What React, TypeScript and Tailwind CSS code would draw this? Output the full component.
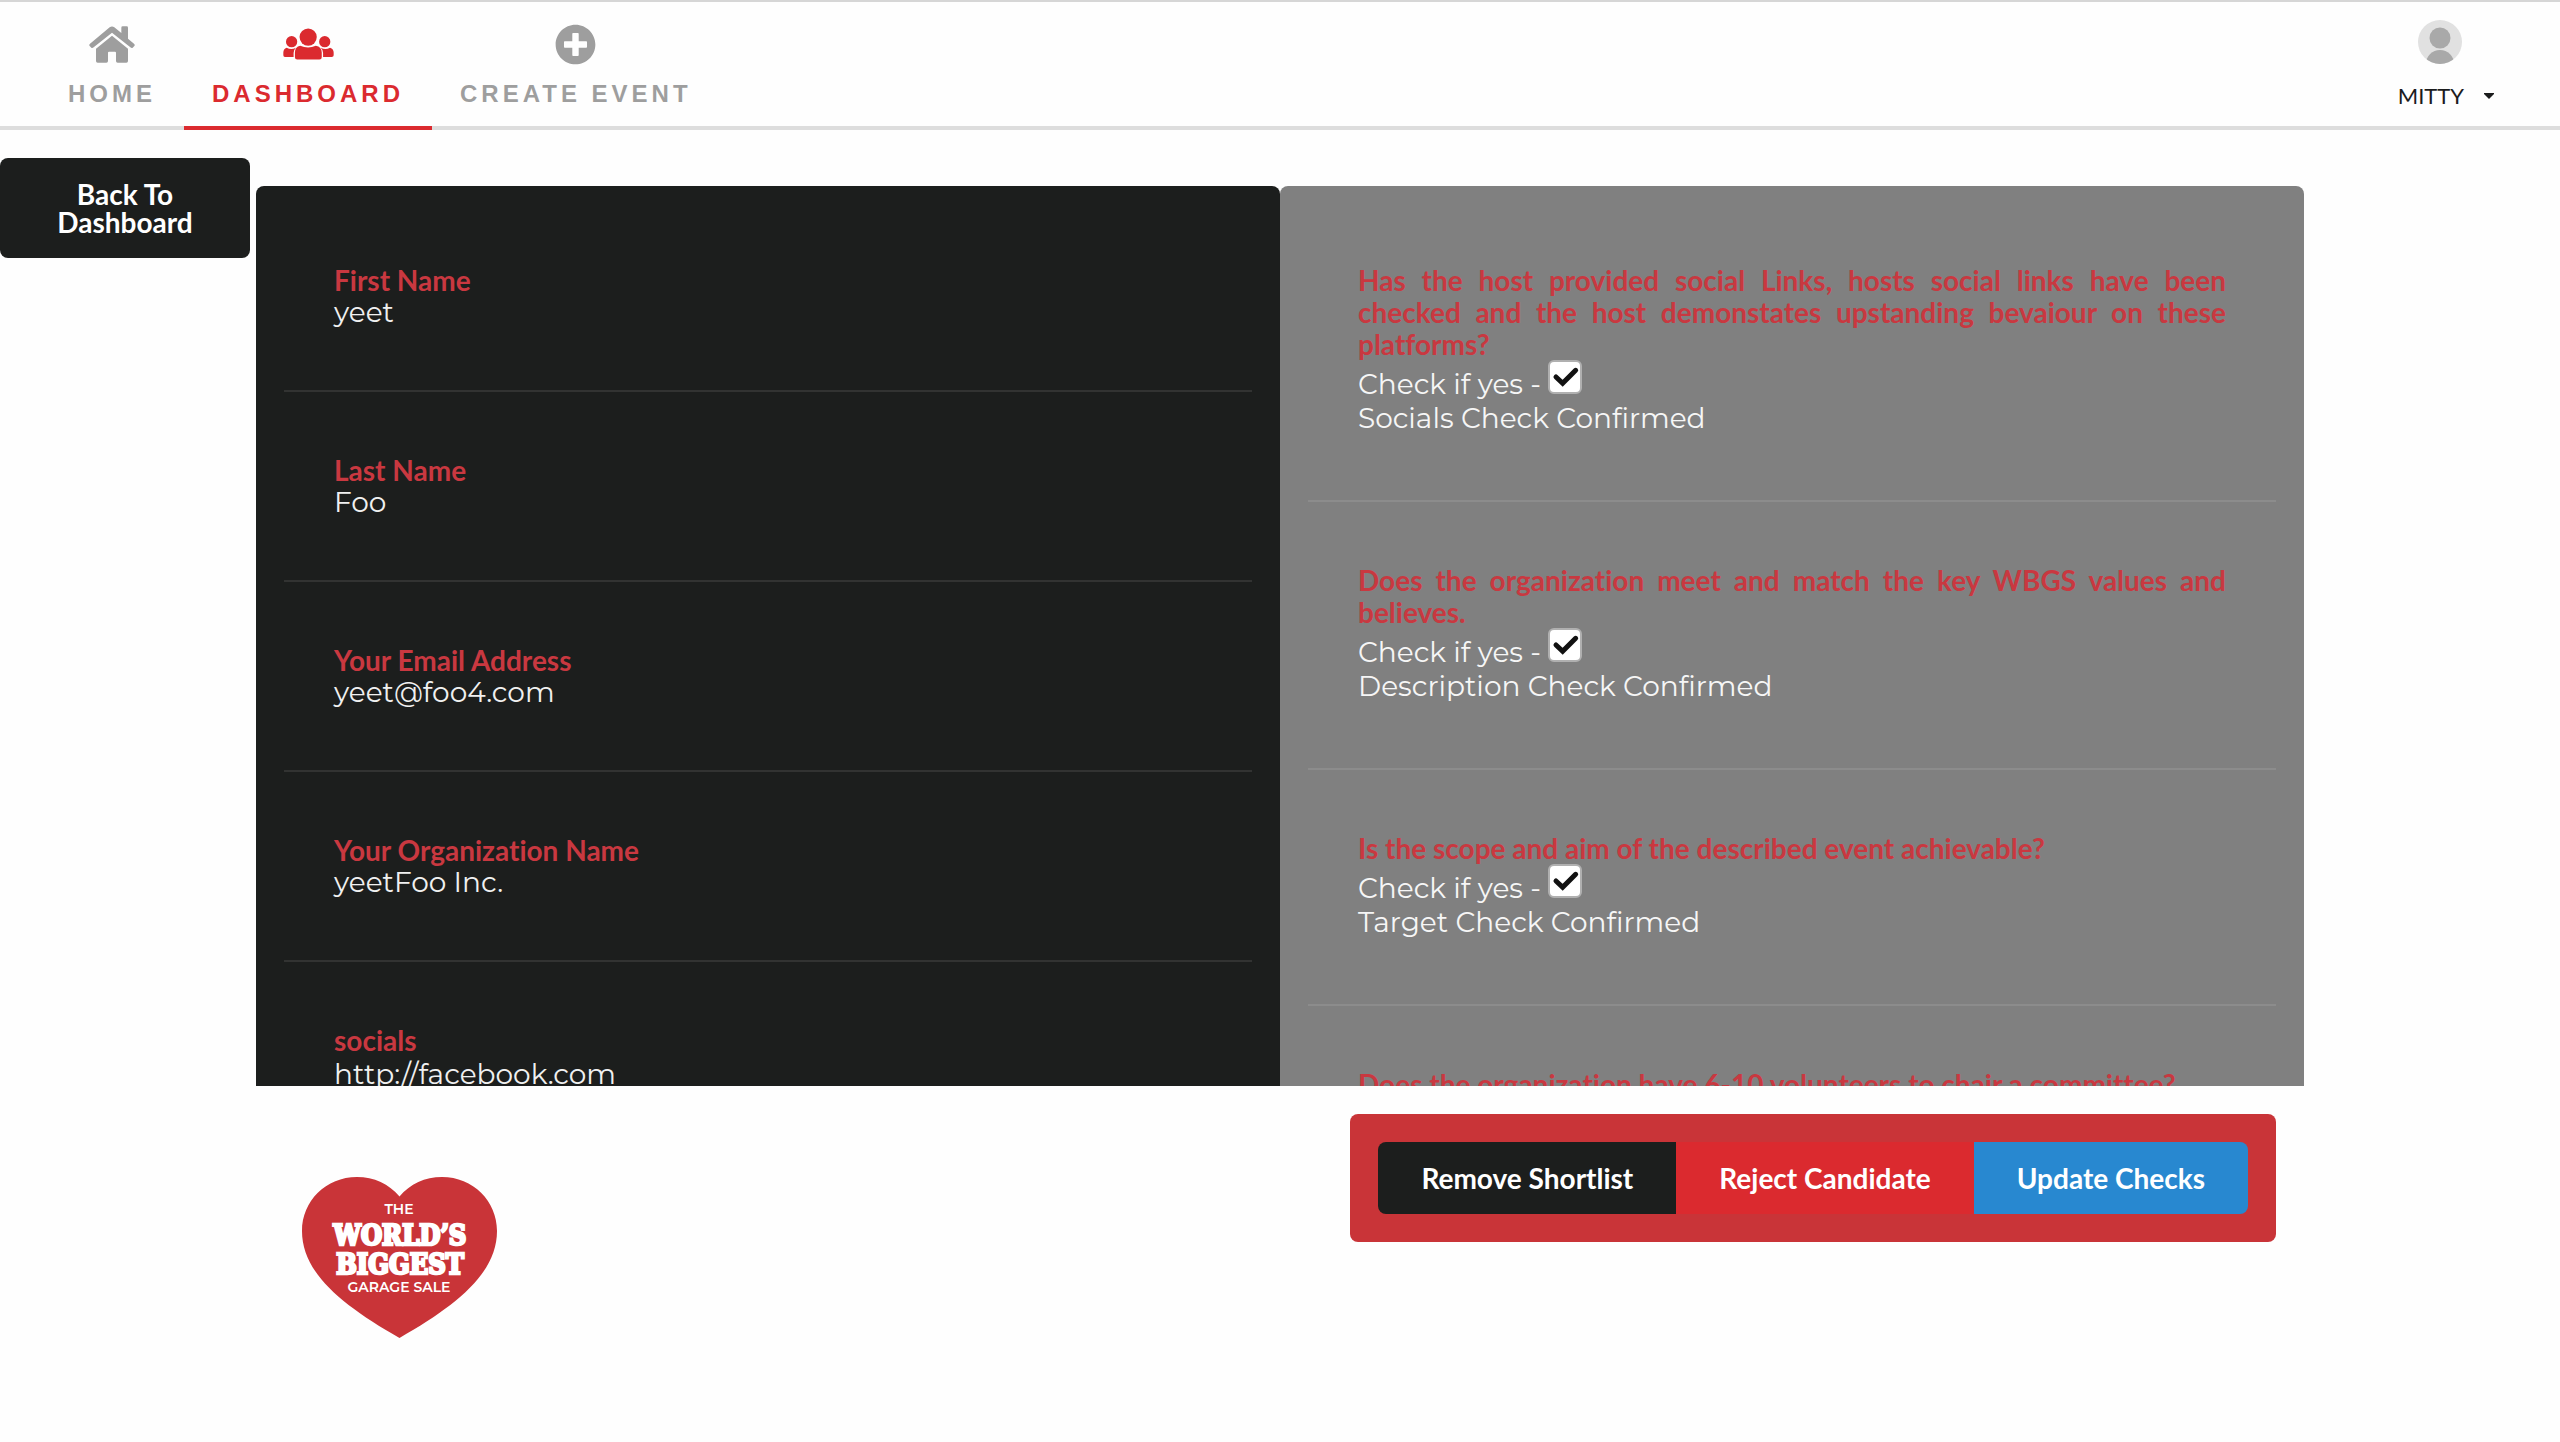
import React from "react";
import { FaPlusCircle } from "react-icons/fa";

const fields = [
  { label: "First Name", value: "yeet" },
  { label: "Last Name", value: "Foo" },
  { label: "Your Email Address", value: "yeet@foo4.com" },
  { label: "Your Organization Name", value: "yeetFoo Inc." },
  { label: "socials", value: "http://facebook.com", tall: true },
];

const checks = [
  {
    id: "socials",
    question:
      "Has the host provided social Links, hosts social links have been checked and the host demonstates upstanding bevaiour on these platforms?",
    status: "Socials Check Confirmed",
  },
  {
    id: "description",
    question: "Does the organization meet and match the key WBGS values and believes.",
    status: "Description Check Confirmed",
  },
  {
    id: "target",
    question: "Is the scope and aim of the described event achievable?",
    status: "Target Check Confirmed",
  },
  {
    id: "volunteers",
    question: "Does the organization have 6-10 volunteers to chair a committee?",
    status: "Volunteers Check Confirmed",
  },
];

const navBase =
  "flex flex-col items-center border-b-4 px-7 pt-5 font-['Liberation_Sans',Arial,sans-serif] text-2xl leading-7 font-bold tracking-[4px]";

function NavItem({ label, active, children }: { label: string; active?: boolean; children: React.ReactNode }) {
  return (
    <a
      href="#"
      className={`${navBase} ${active ? "border-[#db2a2f] text-[#db2a2f]" : "border-transparent text-[#9e9e9e]"}`}
    >
      <span className="flex h-11 items-center">{children}</span>
      <span className="mt-3.5">{label}</span>
    </a>
  );
}

function HomeIcon() {
  return (
    <svg viewBox="0 0 138 111" className="h-[37px] w-[46px]" fill="currentColor" aria-hidden="true">
      <path d="M62 4Q69 -1 76 4L97 21V5Q97 1 101 1H113Q117 1 117 5V38L135 53Q139 57 136 60L131 65Q128 67 124 64L69 20L14 64Q10 67 7 65L2 60Q-1 57 3 53Z" />
      <path d="M69 29L117 68V105Q117 110 112 110H86Q81 110 81 105V80Q81 77 78 77H60Q57 77 57 80V105Q57 110 52 110H26Q21 110 21 105V68Z" />
    </svg>
  );
}

function GroupIcon() {
  return (
    <svg viewBox="0 0 154 96" className="h-8 w-[51px]" fill="currentColor" aria-hidden="true">
      <circle cx="76" cy="27" r="26" />
      <circle cx="26" cy="41" r="17" />
      <circle cx="126" cy="41" r="17" />
      <path d="M52 53Q76 64 99 53Q117 56 117 74V88Q117 95 110 95H43Q36 95 36 88V74Q36 56 52 53Z" />
      <path d="M11 59Q25 67 39 59Q32 65 32 75V87H6Q1 87 1 82V74Q1 62 11 59Z" />
      <path d="M142 59Q128 67 114 59Q121 65 121 75V87H147Q153 87 153 82V74Q153 62 142 59Z" />
    </svg>
  );
}

const slab = "'DejaVu Serif Condensed', 'DejaVu Serif', serif";

function Heart() {
  return (
    <svg viewBox="0 0 195 161" className="h-[161px] w-[195px]" role="img" aria-label="The World's Biggest Garage Sale">
      <path
        d="M97.500 19.500C87 7 72 0 55 0C24 0 0 24 0 54C0 96 40 128 97.500 161C155 128 195 96 195 54C195 24 171 0 140 0C123 0 108 7 97.500 19.500Z"
        fill="#c93438"
      />
      <g fill="#fff" textAnchor="middle">
        <text x="97" y="37" fontFamily="Montserrat, sans-serif" fontSize="14" fontWeight="600">THE</text>
        <g fontFamily={slab} fontSize="27" fontWeight="700" stroke="#fff" strokeWidth="2.500">
          <text x="98" y="68">WORLD’S</text>
          <text x="98" y="97">BIGGEST</text>
        </g>
        <text x="97" y="115" fontFamily="Montserrat, sans-serif" fontSize="14" fontWeight="600">GARAGE SALE</text>
      </g>
    </svg>
  );
}

export default function App() {
  return (
    <div className="min-h-screen bg-[#fefefe] font-[Lato,sans-serif] text-[28px] leading-8 text-[#1b1c1d] [font-variant-ligatures:none]">
      <header className="flex h-[130px] items-stretch justify-between border-t-2 border-[#d6d6d6] bg-[#fefefe] shadow-[inset_0_-4px_0_#dddddd]">
        <nav className="flex pl-10" aria-label="Main">
          <NavItem label="HOME"><HomeIcon /></NavItem>
          <NavItem label="DASHBOARD" active><GroupIcon /></NavItem>
          <NavItem label="CREATE EVENT"><FaPlusCircle size={41} /></NavItem>
        </nav>
        <button type="button" className="mr-[66px] flex flex-col items-center pt-[18px] text-[22px] leading-7">
          <svg viewBox="0 0 44 44" className="mr-3 size-11" aria-hidden="true">
            <clipPath id="face"><circle cx="22" cy="22" r="22" /></clipPath>
            <circle cx="22" cy="22" r="22" fill="#e1e1e1" />
            <g fill="#a9a9a9" clipPath="url(#face)">
              <circle cx="22" cy="18" r="10.500" />
              <circle cx="22" cy="44" r="14" />
            </g>
          </svg>
          <span className="mt-[18px] flex items-center gap-5">
            MITTY
            <svg viewBox="0 0 10 6" className="h-1.5 w-2.5" aria-hidden="true"><path d="M0 0H10V1L5 6L0 1Z" fill="currentColor" /></svg>
          </span>
        </button>
      </header>

      <main className="flex">
        <div className="w-[10%] pt-7 pr-1.5">
          <button type="button" className="w-full rounded-lg bg-[#1c1e1d] px-10 py-[22px] leading-7 font-bold text-white">
            Back To Dashboard
          </button>
        </div>

        <div className="w-4/5 pt-14">
          <div className="flex h-[900px] overflow-y-auto [scrollbar-width:none]">
            <section className="h-max min-h-full flex-1 rounded-t-lg bg-[#1c1e1d] p-7" aria-label="Candidate details">
              <dl className="divide-y-2 divide-[#323332]">
                {fields.map((f) => (
                  <div key={f.label} className="px-[50px] pt-[62px] pb-[62px] first:pt-[50px]">
                    <dt className="font-bold text-[#c93840]">{f.label}</dt>
                    <dd className={`font-[Montserrat,Inter,sans-serif] font-normal text-[#f0f0f0] ${f.tall ? "leading-9" : "leading-8"}`}>{f.value}</dd>
                  </div>
                ))}
              </dl>
            </section>
            <section className="h-max min-h-full flex-1 rounded-t-lg bg-[#808080] p-7" aria-label="Candidate checks">
              <ul className="divide-y-2 divide-[#8c8c8c]">
                {checks.map((c) => (
                  <li key={c.id} className="px-[50px] pt-[62px] pb-[62px] first:pt-[50px]">
                    <h3 className="text-justify font-bold text-[#c93840]">{c.question}</h3>
                    <div className="pb-0.5 font-[Montserrat,Inter,sans-serif] font-normal text-[#f6f6f6] [font-variant-ligatures:normal]">
                      <div className="flex h-10 items-start gap-[7px]">
                        <label htmlFor={c.id} className="pt-2">Check if yes -</label>
                        <span className="relative size-[34px]">
                          <input
                            id={c.id}
                            type="checkbox"
                            defaultChecked
                            className="peer block size-full appearance-none rounded-md border-2 border-[#b0b0b0] bg-white"
                          />
                          <svg
                            viewBox="0 0 102 102"
                            className="pointer-events-none absolute inset-0 hidden size-full peer-checked:block"
                            aria-hidden="true"
                          >
                            <path d="M24 51L44 70L83 31" fill="none" stroke="#111" strokeWidth="15" strokeLinecap="round" />
                          </svg>
                        </span>
                      </div>
                      <p className="leading-9">{c.status}</p>
                    </div>
                  </li>
                ))}
              </ul>
            </section>
          </div>

          <div className="flex items-start justify-between pt-7 pr-7">
            <div className="rounded-lg px-[46px] py-[63px]">
              <Heart />
            </div>
            <div className="flex rounded-lg bg-[#c93438] p-7">
              <div className="flex overflow-hidden rounded-lg leading-7 font-bold text-white">
                <button type="button" className="bg-[#1c1e1d] px-[43px] py-[22px]">Remove Shortlist</button>
                <button type="button" className="bg-[#db2a2f] px-[43px] py-[22px]">Reject Candidate</button>
                <button type="button" className="bg-[#2888d0] px-[43px] py-[22px]">Update Checks</button>
              </div>
            </div>
          </div>
        </div>
      </main>
    </div>
  );
}
